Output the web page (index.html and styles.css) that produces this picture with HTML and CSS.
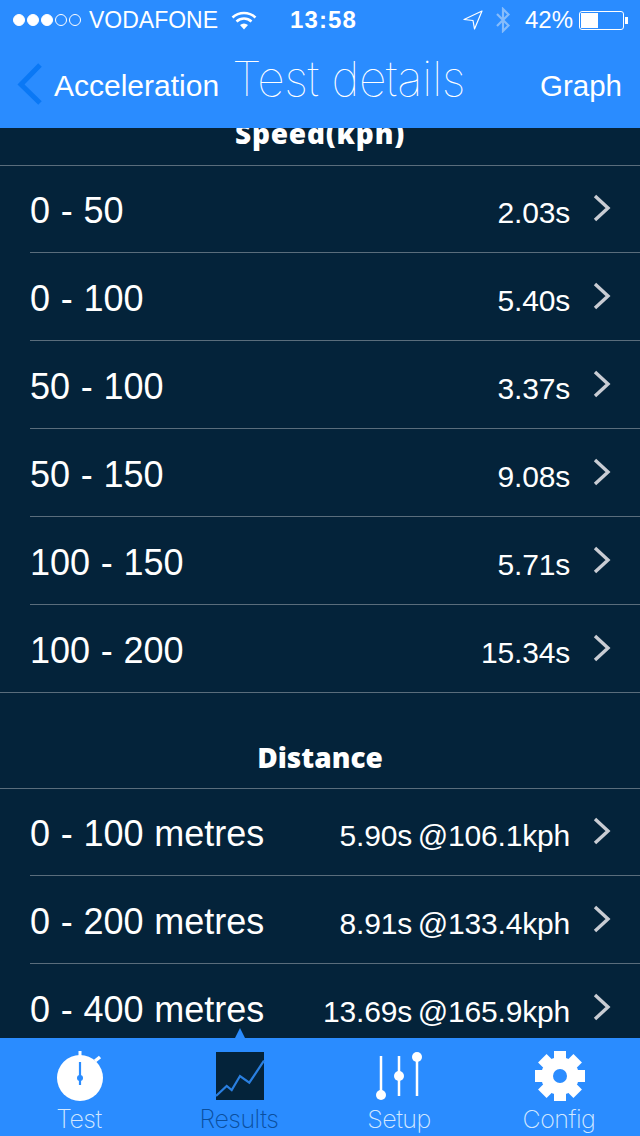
FILE: index.html
```html
<!DOCTYPE html>
<html lang="en">
<head>
<meta charset="utf-8">
<title>Test details</title>
<link rel="stylesheet" href="styles.css">
</head>
<body>
<div class="app">
  <header class="top">
    <div class="status">
      <div class="status-left">
        <span class="signal"><i class="dot on"></i><i class="dot on"></i><i class="dot on"></i><i class="dot"></i><i class="dot"></i></span>
        <span class="carrier">VODAFONE</span>
        <svg class="wifi" width="26" height="20" viewBox="0 0 26 20"><path d="M1.500 7.500C8 1.500 18 1.500 24.500 7.500" fill="none" stroke="#fff" stroke-width="2.600"/><path d="M5.500 11.500C10 7.500 16 7.500 20.500 11.500" fill="none" stroke="#fff" stroke-width="2.600"/><path d="M9 15C11.500 13 14.500 13 17 15L13 19.500Z" fill="#fff"/></svg>
      </div>
      <div class="clock">13:58</div>
      <div class="status-right">
        <svg class="loc" width="20" height="20" viewBox="0 0 20 20"><path d="M19 1L1 9.500L10 10.500L11.500 19Z" fill="none" stroke="#fff" stroke-width="1.200" stroke-linejoin="round"/></svg>
        <svg class="bt" width="16" height="26" viewBox="0 0 16 26"><path d="M2 7L13.500 18.500L8 24V2L13.500 7.500L2 19" fill="none" stroke="#86bcfb" stroke-width="2.200"/></svg>
        <span class="pct">42%</span>
        <span class="battery"><span class="battery-fill"></span></span><span class="battery-tip"></span>
      </div>
    </div>
    <nav class="nav">
      <svg class="back" width="28" height="44" viewBox="0 0 28 44"><path d="M24 3L5 22.500L24 41" fill="none" stroke="#0a78f5" stroke-width="5"/></svg>
      <span class="nav-back">Acceleration</span>
      <h1 class="nav-title">Test details</h1>
      <span class="nav-action">Graph</span>
    </nav>
  </header>

  <main class="content">
    <div class="list">
      <h2 class="section-head section-head-wide">Speed(kph)</h2>
      <ul class="rows">
        <li class="row"><span class="name">0 - 50</span><span class="value">2.03s</span><svg class="chev" width="20" height="28" viewBox="0 0 20 28"><path d="M4 2L17 14L4 26" fill="none" stroke="#c9ccd3" stroke-width="3.400"/></svg></li>
        <li class="row"><span class="name">0 - 100</span><span class="value">5.40s</span><svg class="chev" width="20" height="28" viewBox="0 0 20 28"><path d="M4 2L17 14L4 26" fill="none" stroke="#c9ccd3" stroke-width="3.400"/></svg></li>
        <li class="row"><span class="name">50 - 100</span><span class="value">3.37s</span><svg class="chev" width="20" height="28" viewBox="0 0 20 28"><path d="M4 2L17 14L4 26" fill="none" stroke="#c9ccd3" stroke-width="3.400"/></svg></li>
        <li class="row"><span class="name">50 - 150</span><span class="value">9.08s</span><svg class="chev" width="20" height="28" viewBox="0 0 20 28"><path d="M4 2L17 14L4 26" fill="none" stroke="#c9ccd3" stroke-width="3.400"/></svg></li>
        <li class="row"><span class="name">100 - 150</span><span class="value">5.71s</span><svg class="chev" width="20" height="28" viewBox="0 0 20 28"><path d="M4 2L17 14L4 26" fill="none" stroke="#c9ccd3" stroke-width="3.400"/></svg></li>
        <li class="row"><span class="name">100 - 200</span><span class="value">15.34s</span><svg class="chev" width="20" height="28" viewBox="0 0 20 28"><path d="M4 2L17 14L4 26" fill="none" stroke="#c9ccd3" stroke-width="3.400"/></svg></li>
      </ul>
      <h2 class="section-head">Distance</h2>
      <ul class="rows">
        <li class="row"><span class="name">0 - 100 metres</span><span class="value">5.90s @106.1kph</span><svg class="chev" width="20" height="28" viewBox="0 0 20 28"><path d="M4 2L17 14L4 26" fill="none" stroke="#c9ccd3" stroke-width="3.400"/></svg></li>
        <li class="row"><span class="name">0 - 200 metres</span><span class="value">8.91s @133.4kph</span><svg class="chev" width="20" height="28" viewBox="0 0 20 28"><path d="M4 2L17 14L4 26" fill="none" stroke="#c9ccd3" stroke-width="3.400"/></svg></li>
        <li class="row"><span class="name">0 - 400 metres</span><span class="value">13.69s @165.9kph</span><svg class="chev" width="20" height="28" viewBox="0 0 20 28"><path d="M4 2L17 14L4 26" fill="none" stroke="#c9ccd3" stroke-width="3.400"/></svg></li>
      </ul>
    </div>
  </main>

  <footer class="tabs">
    <div class="tab">
      <svg class="tab-icon" width="52" height="52" viewBox="0 0 52 52"><rect x="24.500" y="1" width="3" height="6" fill="#fff"/><path d="M41 11L46 7" stroke="#fff" stroke-width="3.500"/><circle cx="26" cy="28" r="23" fill="#fff"/><path d="M26 12V35" stroke="#2a8cff" stroke-width="2.200"/><circle cx="26" cy="28" r="3" fill="#2a8cff"/></svg>
      <span class="tab-label">Test</span>
    </div>
    <div class="tab tab-active">
      <svg class="tab-icon" width="52" height="52" viewBox="0 0 52 52"><rect x="2" y="2" width="48" height="48" fill="#04233a"/><path d="M2 46L12.700 36L17.700 40L26 26L35.300 32.700L50 10.700" fill="none" stroke="#2a7fe0" stroke-width="2.200"/></svg>
      <span class="tab-label">Results</span>
      <span class="tab-pointer"></span>
    </div>
    <div class="tab">
      <svg class="tab-icon" width="52" height="52" viewBox="0 0 52 52"><path d="M7 6V44M25 6V46M43 6V46" stroke="#fff" stroke-width="2.500"/><circle cx="7" cy="45" r="5" fill="#fff"/><circle cx="25" cy="26" r="5" fill="#fff"/><circle cx="43" cy="7" r="5" fill="#fff"/></svg>
      <span class="tab-label">Setup</span>
    </div>
    <div class="tab">
      <svg class="tab-icon" width="52" height="52" viewBox="0 0 52 52"><circle cx="26" cy="26" r="19" fill="#fff"/><g fill="#fff"><rect x="20" y="1" width="12" height="50"/><rect x="20" y="1" width="12" height="50" transform="rotate(45 26 26)"/><rect x="20" y="1" width="12" height="50" transform="rotate(90 26 26)"/><rect x="20" y="1" width="12" height="50" transform="rotate(135 26 26)"/></g><circle cx="26" cy="26" r="7" fill="#2a8cff"/></svg>
      <span class="tab-label">Config</span>
    </div>
  </footer>
</div>
</body>
</html>
```
FILE: styles.css
```css
* { box-sizing: border-box; }
html, body { margin: 0; padding: 0; }
body { background: #04233a; font-family: "Liberation Sans", Arial, sans-serif; color: #fff; }
.app { width: 640px; height: 1136px; display: flex; flex-direction: column; overflow: hidden; }

.top { height: 128px; background: #2a8cff; flex: none; }
.status { height: 40px; display: flex; align-items: center; justify-content: space-between; padding: 0 12px 0 13px; position: relative; }
.status-left, .status-right { display: flex; align-items: center; }
.signal { display: flex; gap: 2px; margin-right: 8px; }
.dot { width: 12px; height: 12px; border-radius: 50%; border: 1px solid #fff; display: block; }
.dot.on { background: #fff; }
.carrier { font-size: 23px; }
.wifi { margin-left: 13px; }
.clock { font-size: 24px; font-weight: bold; position: absolute; left: 290px; letter-spacing: 1.1px; }
.loc { margin-right: 12px; }
.bt { margin-right: 14px; }
.pct { font-size: 24px; margin-right: 6px; }
.battery { width: 45px; height: 19px; border: 1px solid #fff; border-radius: 3px; padding: 1px; display: block; }
.battery-fill { display: block; width: 17px; height: 100%; background: #fff; }
.battery-tip { width: 3px; height: 7px; background: #fff; margin-left: 1px; }

.nav { height: 88px; position: relative; display: flex; align-items: center; padding: 0 18px 0 16px; }
.back { flex: none; }
.nav-back { font-size: 30px; margin-left: 10px; position: relative; top: 2px; }
.nav-title { position: absolute; left: 232px; top: 9px; margin: 0; font-family: Inter, sans-serif; font-weight: 100; font-size: 48px; letter-spacing: -0.5px; line-height: 60px; white-space: nowrap; }
.nav-action { margin-left: auto; font-size: 29.500px; position: relative; top: 2px; }

.content { flex: 1; min-height: 0; overflow: hidden; background: #04233a; position: relative; }
.list { margin-top: -58px; }
.section-head { height: 96px; margin: 0; display: flex; align-items: flex-end; justify-content: center; padding-bottom: 14px; font-family: "Open Sans", sans-serif; font-weight: 800; font-size: 28px; line-height: 34px; border-bottom: 1px solid #5a6d7c; }
.section-head-wide { letter-spacing: 0.8px; padding-bottom: 15px; }
.rows { list-style: none; margin: 0; padding: 0; border-bottom: 1px solid #5a6d7c; }
.row { height: 88px; margin-left: 30px; padding-right: 29px; display: flex; align-items: center; border-bottom: 1px solid #5a6d7c; }
.row:first-child { height: 87px; }
.row:last-child { border-bottom: 0; height: 87px; }
.name { font-size: 36px; word-spacing: 0.7px; position: relative; top: 2px; white-space: nowrap; }
.value { margin-left: auto; font-size: 30px; word-spacing: -2.500px; letter-spacing: -0.18px; position: relative; top: 4px; white-space: nowrap; }
.chev { margin-left: 21px; position: relative; top: -1px; flex: none; }

.tabs { height: 98px; flex: none; background: #2a8cff; display: grid; grid-template-columns: repeat(4, 160px); position: relative; }
.tab { display: flex; flex-direction: column; align-items: center; padding-top: 12px; position: relative; }
.tab-icon { flex: none; }
.tab-label { font-family: Inter, sans-serif; font-weight: 200; font-size: 25px; line-height: 30px; margin-top: 2px; color: #d3e8ff; letter-spacing: -0.5px; position: relative; left: -1px; }
.tab-active .tab-label { color: #0a4f9e; }
.tab-pointer { position: absolute; top: -10px; left: 75px; width: 0; height: 0; border-left: 5px solid transparent; border-right: 5px solid transparent; border-bottom: 10px solid #2a8cff; }
```
